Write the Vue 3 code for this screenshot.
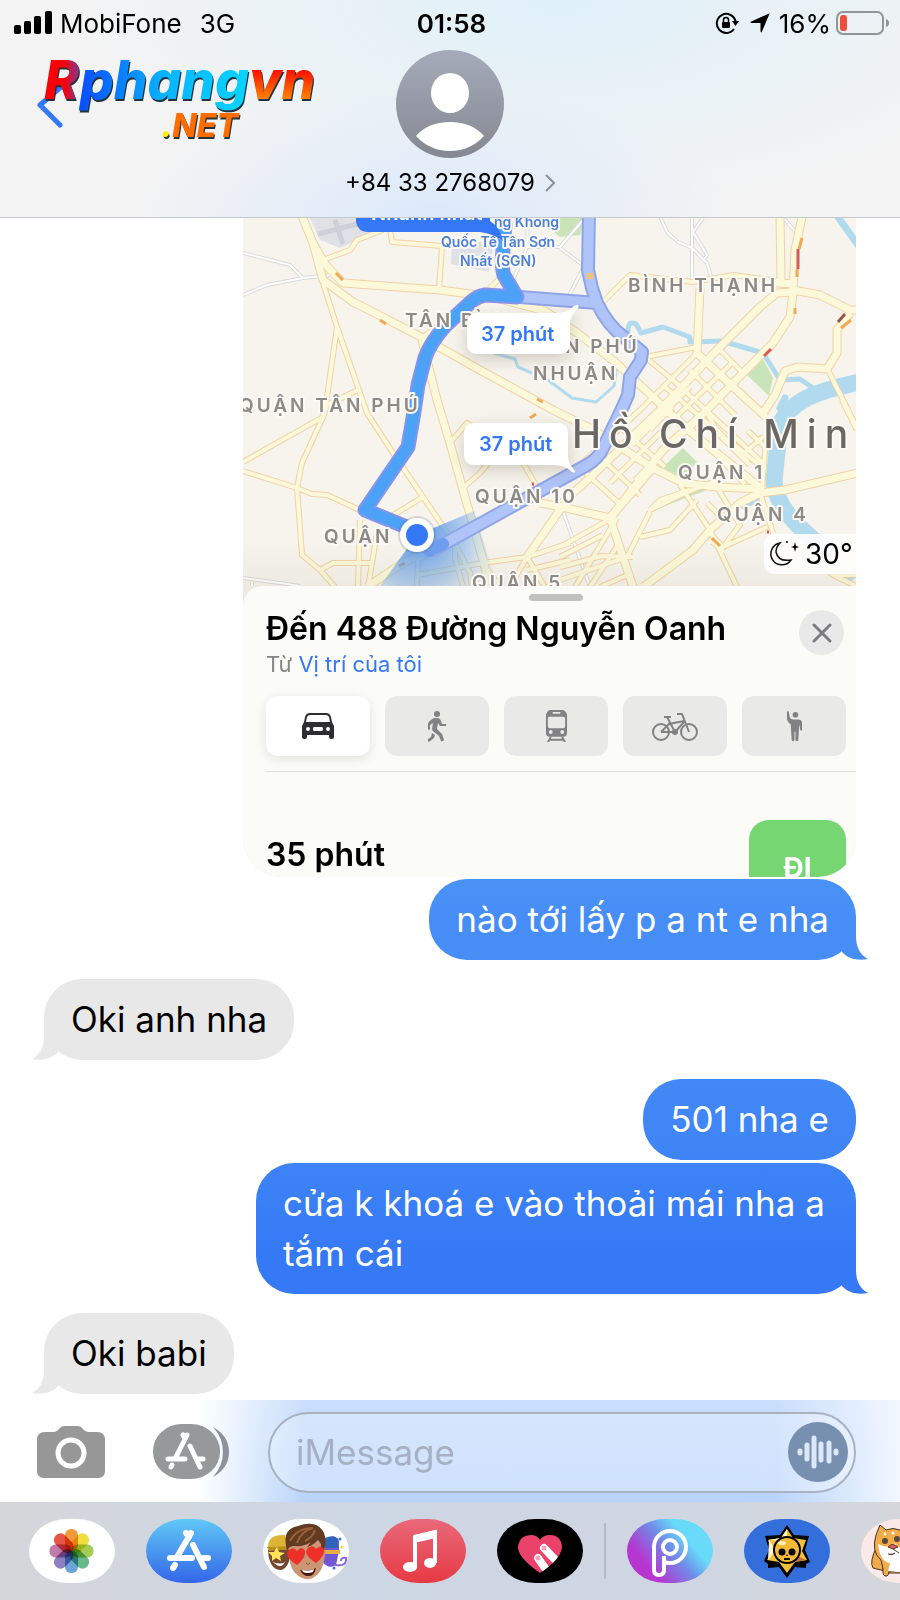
<template>
  <div class="phone">
    <header class="header">
      <div class="status-bar">
        <div class="status-left">
          <svg class="signal" viewBox="0 0 38 24">
            <rect x="0" y="14" width="7" height="9" rx="2" />
            <rect x="10" y="10" width="7" height="13" rx="2" />
            <rect x="20" y="5" width="7" height="18" rx="2" />
            <rect x="31" y="0" width="7" height="23" rx="2" />
          </svg>
          <span>MobiFone</span>
          <span class="network">3G</span>
        </div>
        <span class="clock">01:58</span>
        <div class="status-right">
          <svg class="rotation-lock" viewBox="0 0 24 22">
            <path d="M19 17A9.500 9.500 0 1 1 20.500 9" fill="none" stroke="#000" stroke-width="2" />
            <path d="M17 9h7l-3.500 5z" />
            <rect x="7" y="10" width="8" height="6" rx="1" />
            <path d="M8.500 10V8a2.500 2.500 0 0 1 5 0v2" fill="none" stroke="#000" stroke-width="1.500" />
          </svg>
          <svg class="location-arrow" viewBox="0 0 20 20">
            <path d="M19.700.3 12 18.500q-1 2-1.500-.5V10H2q-3 0-.7-1.400z" />
          </svg>
          <span class="percent">16%</span>
          <svg class="battery" viewBox="0 0 53 24">
            <rect x="1" y="1" width="46" height="22" rx="6" fill="none" stroke="#919597" stroke-width="2" />
            <rect x="4" y="4" width="7" height="16" rx="3" fill="#eb4e3d" />
            <path d="M50 8q3 1 3 4t-3 4z" fill="#919597" />
          </svg>
        </div>
      </div>

      <div class="contact-row">
        <button class="back-btn" aria-label="Back">
          <svg viewBox="0 0 30 44">
            <path d="M25 3 4 21l20 20" fill="none" stroke="#3478f6" stroke-width="5" stroke-linecap="round" stroke-linejoin="round" />
          </svg>
        </button>
        <button class="contact">
          <svg class="avatar" viewBox="0 0 108 108">
            <defs>
              <linearGradient id="avatarFill" x1="0" y1="0" x2="0" y2="1">
                <stop offset="0" stop-color="#a6abb9" />
                <stop offset="1" stop-color="#858892" />
              </linearGradient>
            </defs>
            <circle cx="54" cy="54" r="54" fill="url(#avatarFill)" />
            <ellipse cx="54" cy="43" rx="19" ry="20" fill="#fff" />
            <path d="M20 86q12-14 34-14t34 14q-14 15-34 15T20 86z" fill="#fff" />
          </svg>
          <span class="contact-name">
            +84 33 2768079
            <svg viewBox="0 0 10 18">
              <path d="m1 1 8 8-8 8" fill="none" stroke="#8c9096" stroke-width="2" />
            </svg>
          </span>
        </button>
        <span></span>
      </div>

      <svg class="site-logo" viewBox="0 0 280 84">
        <defs>
          <linearGradient id="logoR">
            <stop offset=".55" stop-color="#fb0006" />
            <stop offset="1" stop-color="#7a3c9a" />
          </linearGradient>
          <linearGradient id="logoBlue">
            <stop offset="0" stop-color="#0a4bff" />
            <stop offset=".5" stop-color="#08b3ff" />
            <stop offset="1" stop-color="#08d5ff" />
          </linearGradient>
          <linearGradient id="logoVn" x1="0" y1="0" x2="0" y2="1">
            <stop offset=".35" stop-color="#fb1100" />
            <stop offset=".8" stop-color="#ff8400" />
          </linearGradient>
        </defs>
        <g class="logo-text">
          <text x="0" y="41" fill="url(#logoR)">R</text>
          <text x="36" y="41" fill="url(#logoBlue)">phang</text>
          <text x="205" y="41" fill="url(#logoVn)">vn</text>
          <text x="117" y="79" class="logo-small"><tspan fill="#fff200">.</tspan><tspan fill="#ff6d00">NET</tspan></text>
        </g>
      </svg>
    </header>

    <main class="chat">
      <article class="shared-map">
        <svg class="map" viewBox="243 218 613 368">
          <defs>
            <radialGradient id="cone" gradientUnits="userSpaceOnUse" cx="417" cy="535" r="82">
              <stop offset="0" stop-color="#3b85ea" stop-opacity=".9" />
              <stop offset=".6" stop-color="#6ba5ea" stop-opacity=".5" />
              <stop offset="1" stop-color="#9cc4ee" stop-opacity=".1" />
            </radialGradient>
            <linearGradient id="mapFade" x1="0" y1="0" x2="0" y2="1">
              <stop offset="0" stop-color="#807860" stop-opacity="0" />
              <stop offset="1" stop-color="#807860" stop-opacity=".08" />
            </linearGradient>
          </defs>
          <rect x="243" y="218" width="613" height="368" fill="#f7f4ed" />

          <g fill="#dfe1e6">
            <path d="M310 218h85l-10 14-28 8-17 8-20-8z" />
            <path d="M452 242h42l-5 30-38-8z" />
          </g>
          <path d="m318 234 55-14m-38 0 8 24" stroke="#cdd0d8" stroke-width="5" fill="none" />
          <g fill="#c9e4b8">
            <path d="M553 218h31l-4 17-20 2-10-8z" />
            <path d="m747 375 16-16 10 19-4 18z" />
            <path d="m662 468 21-20 14 14-14 15z" />
            <path d="m661 501 46-18v7l-42 16z" />
          </g>

          <g fill="none" stroke="#b2daee" stroke-linecap="round" stroke-linejoin="round">
            <path d="M860 382C820 390 790 400 780 425L774 480Q774 510 825 549" stroke-width="17" />
            <path d="M628 331q0-11 8-7l5 9 22-6 27 10v5l32-1 41 12 17 27 20-1 13 9" stroke-width="5" />
            <path d="m838 217 20 28M785 398l-5 10" stroke-width="7" />
            <path d="m493 353 22 6 3 8 30 13 24 18 24 4 18-16 3-22-9-6" stroke-width="3" />
            <path d="m850 577 8-6" stroke-width="8" />
            <path d="M743 507l16-7" stroke-width="4" />
          </g>

          <g fill="none" stroke-linejoin="round">
            <path v-for="road in lanes" :key="road" :d="road" stroke="#d9d9d8" stroke-width="4" />
            <path v-for="road in lanes" :key="'in' + road" :d="road" stroke="#fff" stroke-width="2" />
            <path v-for="road in streets" :key="road" :d="road" stroke="#f0d2a6" stroke-width="6" />
            <path v-for="road in avenues" :key="road" :d="road" stroke="#f0d2a6" stroke-width="9" />
            <path v-for="road in streets" :key="'in' + road" :d="road" stroke="#fcf8da" stroke-width="4" />
            <path v-for="road in avenues" :key="'in' + road" :d="road" stroke="#fcf9da" stroke-width="7" />
          </g>

          <g fill="none" stroke-width="3">
            <path d="M798 249v20M764 356l7-7" stroke="#dd5b54" />
            <path d="m802 238-3 11M797 269v8M795 308v6M841 328l10-8M336 273l7 7M380 320l6 4M530 418l6-4M537 399l6 3M399 566l6-3M712 538l8 8" stroke="#eeaa55" />
            <path d="m838 322 7-8" stroke="#93544f" />
            <path d="M532 484h2M767 532h2" stroke="#e05050" />
          </g>

          <path d="M417 535 474 511 498 586H380z" fill="url(#cone)" />

          <g fill="none" stroke-linejoin="round" stroke-linecap="round">
            <path :d="altRoute" stroke="#90a4e7" stroke-width="14" />
            <path :d="altRoute" stroke="#afc5f9" stroke-width="10" />
            <path d="m429 551 14-7" stroke="#6d9df0" stroke-width="12" />
            <path :d="mainRoute" stroke="#8894eb" stroke-width="15" />
            <path :d="mainRoute" stroke="#4ba2f7" stroke-width="11" />
            <path d="M590 273v6" stroke="#f1c27b" stroke-width="7" stroke-linecap="butt" />
          </g>
          <rect x="243" y="540" width="613" height="46" fill="url(#mapFade)" />

          <text
            v-for="label in labels"
            :key="label.text + label.x"
            :x="label.x"
            :y="label.y"
            :class="['map-label', label.kind]"
          >{{ label.text }}</text>

          <circle cx="417" cy="535" r="19" fill="#50607a" opacity=".2" />
          <circle cx="417" cy="535" r="17" fill="#fff" />
          <circle cx="417" cy="535" r="11" fill="#3478f6" />

          <path d="M356 210v12q2 10 12 10H480q14 2 23 9-3-14-13-20v-11z" fill="#3478f6" />
          <text x="371" y="220" class="fastest">Nhanh nhất</text>

          <g class="callout">
            <path d="M478 313h78q12 0 18-7 6-3 4 2-9 9-8 18v17q0 11-11 11h-81q-11 0-11-11v-19q0-11 11-11z" />
            <text x="481" y="341">37 phút</text>
          </g>
          <g class="callout">
            <path d="M475 423h82q11 0 11 11v20q-1 8 7 17 1 3-3 1-7-7-18-7H475q-11 0-11-11v-20q0-11 11-11z" />
            <text x="479" y="451">37 phút</text>
          </g>

          <rect x="764" y="534" width="100" height="40" rx="10" fill="#fdfdfc" opacity=".93" />
          <path d="M780 543a11 11 0 1 0 11 17q-13 2-15-8 0-5 4-9z" fill="none" stroke="#111" stroke-width="1.500" />
          <path d="m795 542 1 4 3 1-3 1-1 4-1-4-3-1 3-1z" />
          <circle cx="787" cy="542" r="1" />
          <text x="805" y="564" class="weather">30°</text>
        </svg>

        <section class="sheet">
          <div class="grabber"></div>
          <div class="sheet-head">
            <div>
              <h2>Đến 488 Đường Nguyễn Oanh</h2>
              <p>Từ <a href="#">Vị trí của tôi</a></p>
            </div>
            <button class="close-btn" aria-label="Close">
              <svg viewBox="0 0 20 20">
                <path d="m2 2 16 16M18 2 2 18" stroke="#7d7d80" stroke-width="3" stroke-linecap="round" />
              </svg>
            </button>
          </div>

          <div class="modes">
            <button class="mode active" aria-label="Drive">
              <svg viewBox="0 0 32 26" width="32">
                <path fill-rule="evenodd" d="M8 0h16q4 0 5 4l1 5 2 4v11q0 2-2 2h-1q-2 0-2-2v-2H5v2q0 2-2 2H2q-2 0-2-2V13l2-4 1-5q1-4 5-4zM8 2Q6 2 5 4L4 9h24l-1-5q-1-2-3-2zM6 14a2 2 0 1 0 0 4 2 2 0 0 0 0-4zm20 0a2 2 0 1 0 0 4 2 2 0 0 0 0-4zM12 14q-1 0-1 2t1 2h8q1 0 1-2t-1-2z" />
              </svg>
            </button>
            <button class="mode" aria-label="Walk">
              <svg viewBox="0 0 20 32" width="20">
                <circle cx="10" cy="4" r="3" />
                <path d="M10 8q3 0 4 3l1 3h4q1 2-1 2h-5l-2-3-1 6 5 5 2 6q-1 2-3 1l-2-5-5-4q-2-1-2-3l1-6-3 2v4q-1 2-2 0v-5q0-2 3-4l3-2z" />
                <path d="m5 23 3 2-1 3-5 4q-2-1-1-3l3-2z" />
              </svg>
            </button>
            <button class="mode" aria-label="Transit">
              <svg viewBox="0 0 24 34" width="23">
                <path fill-rule="evenodd" d="M5 0h14q4 2 4 6v18q0 4-4 4H5q-4 0-4-4V6q0-4 4-6zm3 2v2h8V2zM4 7q-1 0-1 2v8q0 2 2 2h14q2 0 2-2V9q0-2-2-2zm2 14a2 2 0 1 0 0 4 2 2 0 0 0 0-4zm12 0a2 2 0 1 0 0 4 2 2 0 0 0 0-4z" />
                <path d="m6 28-3 6m15-6 3 6M5 31h14" fill="none" stroke="#828284" stroke-width="2" />
              </svg>
            </button>
            <button class="mode" aria-label="Cycle">
              <svg viewBox="0 0 46 29" width="46" class="line-icon">
                <circle cx="9" cy="20" r="8" />
                <circle cx="37" cy="20" r="8" />
                <path d="m9 20 8-8 15-3M15 5l8 15H9m14 0 9-10m-7-8h5l7 18M12 5h7" />
                <circle cx="23" cy="20" r="2" />
              </svg>
            </button>
            <button class="mode" aria-label="Rideshare">
              <svg viewBox="0 0 18 34" width="17">
                <circle cx="10" cy="5" r="3" />
                <path d="M1 2q1-2 2 0l1 6q1 2 4 2h5q4 0 4 4v7q-1 2-2 0l-1-6-1 17q-1 2-3 0v-9h-1v9q-1 2-3 0l-1-17Q1 13 1 8z" />
              </svg>
            </button>
          </div>

          <div class="route-row">
            <strong>35 phút</strong>
            <button class="go-btn">ĐI</button>
          </div>
        </section>
      </article>

      <div
        v-for="msg in messages"
        :key="msg.text"
        :class="['bubble', msg.from, msg.tone, { spaced: msg.spaced }]"
      >
        {{ msg.text }}
        <svg v-if="msg.tail" class="tail" viewBox="0 0 32 42">
          <path d="M20 0V18C20 29 24 37 32 41 22 43 12 41 6 34V0z" />
        </svg>
      </div>
    </main>

    <form class="composer" @submit.prevent="draft = ''">
      <button type="button" class="camera-btn" aria-label="Camera">
        <svg viewBox="0 0 68 52">
          <path fill="#979797" d="M8 6h9q3 0 5-3 2-3 5-3h14q3 0 5 3 2 3 5 3h9q8 0 8 8v31q0 7-7 7H7q-7 0-7-7V14q0-8 8-8z" />
          <circle cx="34" cy="27" r="13" fill="none" stroke="#fff" stroke-width="5" />
        </svg>
      </button>
      <button type="button" class="apps-btn" aria-label="Apps">
        <svg viewBox="0 0 76 56">
          <rect width="67" height="55" rx="29" ry="27" fill="#969899" />
          <path d="M60 3q16 9 16 25T60 53q10-11 10-25T60 3z" fill="#8c919c" />
          <g fill="none" stroke="#fff" stroke-width="5" stroke-linecap="round">
            <path d="M34 11 23 33M30 11l2 3M37 22l10 21M15 35h17m12 0h6M19 41l-1 2" />
          </g>
        </svg>
      </button>
      <div class="input-wrap">
        <input v-model="draft" type="text" placeholder="iMessage" aria-label="iMessage" />
        <button type="button" class="voice-btn" aria-label="Record audio">
          <svg viewBox="0 0 60 60">
            <path d="M12 29v2M19 23v14M26 16v28M33 22v16M41 21v18M48 29v2" stroke="#dce7f7" stroke-width="5" stroke-linecap="round" />
          </svg>
        </button>
      </div>
    </form>

    <nav class="app-strip">
      <button class="app photos" aria-label="Photos">
        <svg viewBox="0 0 86 64">
          <rect
            v-for="(color, i) in petals"
            :key="color"
            x="36"
            y="10"
            width="13"
            height="22"
            rx="6"
            :fill="color"
            :transform="`rotate(${i * 45} 42.500 32)`"
          />
        </svg>
      </button>
      <button class="app store" aria-label="App Store">
        <svg viewBox="0 0 86 64">
          <g fill="none" stroke="#fff" stroke-width="6" stroke-linecap="round">
            <path d="M45 14 31 38M40 14l3 4M47 26l11 22M24 39h22m11 0h5M29 46l-2 3" />
          </g>
        </svg>
      </button>
      <button class="app" aria-label="Memoji">
        <svg viewBox="0 0 86 64">
          <path d="M5 31q1 20 13 20 9-2 10-21z" fill="#75492f" />
          <path d="M5 28q0-13 17-12l4 13z" fill="#deb437" />
          <path d="m4 28 23-1v3L6 32z" fill="#bd8f1c" />
          <path d="m14 28 2 5 6 1-5 3 1 5-5-3-4 3v-5l-4-4h6z" fill="#ffe35a" />
          <path d="M10 43q8 3 12 0-4 8-12 0z" fill="#fff" />
          <path d="M62 20q11-6 14 2v10l-3 14q-8 5-14-4z" fill="#7257d4" />
          <path d="M62 19q9-4 13 1v9H62z" fill="#2e65b8" />
          <path d="M62 31h15v4H62z" fill="#e9ad45" />
          <path d="M72 46q12 2 11-7-5-1-5 3" fill="none" stroke="#8565d7" stroke-width="2" />
          <g fill="#3b6cf2"><circle cx="77" cy="20" r="1.500" /><circle cx="71" cy="49" r="1.500" /></g>
          <circle cx="79" cy="28" r="1.500" fill="#f7d52f" />
          <path d="M26 25q-1 22 6 29 12 12 23 1 8-8 7-30L44 14z" fill="#cc9675" />
          <path d="M24 31Q18 10 35 7q19-7 26 7 3 8 0 18-3-1-3-7l-3-4q-6 6-11 7l4-5q-7 5-17 4-4 0-7 4z" fill="#633a22" />
          <path d="M27 22Q34 9 50 9 38 12 34 24M42 22q8-4 10-11" stroke="#9a6237" stroke-width="2" fill="none" />
          <g fill="#ef2f2a">
            <path d="M34 46q-14-9-8-15 5-4 8 1 5-6 8 0 1 7-8 14z" />
            <path d="M53 44q-14-9-8-15 5-4 8 1 5-5 8 0 1 7-8 14z" />
          </g>
          <path d="M43 44q2 3 4 0" stroke="#8f5b42" fill="none" />
          <path d="M37 51q9 2 16-2-2 9-8 8-5 0-8-6z" fill="#4a1710" />
          <path d="M39 51q7 2 12-1l-1 3q-6 2-10 0z" fill="#fff" />
        </svg>
      </button>
      <button class="app music" aria-label="Music">
        <svg viewBox="0 0 86 64">
          <path d="M35 49V18l20-5v31" fill="none" stroke="#fff" stroke-width="4" />
          <path d="m34 16 22-5v8l-22 5z" fill="#fff" />
          <ellipse cx="30" cy="48" rx="7" ry="5" fill="#fff" />
          <ellipse cx="50" cy="44" rx="6" ry="5" fill="#fff" />
        </svg>
      </button>
      <button class="app touch" aria-label="Digital Touch">
        <svg viewBox="0 0 86 64">
          <defs>
            <clipPath id="heartClip">
              <path d="M43 54Q20 38 21 27q2-11 13-11 6 0 9 5 3-5 10-5 11 0 12 12-1 12-22 26z" />
            </clipPath>
          </defs>
          <path d="M43 54Q20 38 21 27q2-11 13-11 6 0 9 5 3-5 10-5 11 0 12 12-1 12-22 26z" fill="#eb426b" />
          <g clip-path="url(#heartClip)">
            <path d="m66 49-19-20m8 30L41 39" stroke="#fff" stroke-width="8" stroke-linecap="round" />
          </g>
          <circle cx="47" cy="29" r="2.500" fill="#f5a3b5" />
          <circle cx="41" cy="39" r="2.500" fill="#f5a3b5" />
        </svg>
      </button>
      <span class="strip-divider"></span>
      <button class="app picsart" aria-label="PicsArt">
        <svg viewBox="0 0 86 64">
          <g fill="none" stroke="#fff" stroke-width="4">
            <path d="M27 28a16 16 0 1 1 16 16q-3 0-6-1v8q0 5-5 5t-5-5z" />
            <circle cx="43" cy="28" r="7" />
            <path d="M37 37v7" />
          </g>
        </svg>
      </button>
      <button class="app brawl" aria-label="Brawl Stars">
        <svg viewBox="0 0 86 64">
          <path d="m43 6 7 10 15 1-4 14 5 12-4 2v4l-11-1-8 11-8-11-11 1v-4l-4-3 5-11-4-14 15-1z" />
          <path d="m43 10 6 9 13 2-4 11 5 9-12 2-8 11-8-11-12-2 5-9-4-11 13-2z" fill="#f3c13c" />
          <path d="M43 10v12L24 21l13-2zM25 21l7 10-8 10" fill="#fff6cf" />
          <path d="m43 54 8-11 11-2-8-4z" fill="#cc7040" />
          <circle cx="43" cy="31" r="13" fill="#f4ba35" stroke="#000" stroke-width="2" />
          <ellipse cx="38" cy="24" rx="4" ry="2" fill="#fff0b4" />
          <circle cx="38" cy="33" r="3.500" /><circle cx="48" cy="33" r="3.500" />
          <path d="m43 35-1 2h2zM40 39h6v2h-6z" />
        </svg>
      </button>
      <button class="app shiba" aria-label="Shiba stickers">
        <svg viewBox="0 0 86 64">
          <g stroke="#443329">
            <path d="M16 27Q8 43 12 49l12 3 2-22z" fill="#efaa49" />
            <path d="m15 16 4-10 6 5q7-3 14 0l5-5q4 10 3 16 3 10-1 16l5 16H23l-3-13q-10-8-5-25z" fill="#f2ad48" />
            <path d="M22 49q-1 9 4 8 2-1 2-5l18 2q2 6 6 2l-1-16" fill="#efaa49" />
          </g>
          <path d="M17 25q2 18 12 19l-2 8 19 2q4-14 0-25-8 2-12-5-5 7-17 1z" fill="#fff" />
          <circle cx="24" cy="22" r="3" fill="#56483f" /><circle cx="36" cy="20" r="3" fill="#56483f" />
          <circle cx="24" cy="15" r="1.500" fill="#fff" /><circle cx="32" cy="14" r="1.500" fill="#fff" />
          <path d="M27 28q4-5 10 0l-5 2zM27 35q4 2 7-1M32 30l6 4" fill="#df5c52" stroke="#54372e" />
        </svg>
      </button>
    </nav>
  </div>
</template>

<script setup>
import { ref } from 'vue'

const draft = ref('')

const messages = [
  { text: 'nào tới lấy p a nt e nha', from: 'me', tone: 'light', tail: true },
  { text: 'Oki anh nha', from: 'them', tail: true, spaced: true },
  { text: '501 nha e', from: 'me', tone: 'mid', spaced: true },
  { text: 'cửa k khoá e vào thoải mái nha a tắm cái', from: 'me', tone: 'deep', tail: true },
  { text: 'Oki babi', from: 'them', tail: true, spaced: true },
]

const petals = ['#f09a38', '#f1dd3d', '#a4cb55', '#69ba8b', '#6aa4d8', '#8c80c0', '#c27cac', '#e75548']

const labels = [
  { text: 'ng Không', x: 494, y: 227, kind: 'airport' },
  { text: 'Quốc Tế Tân Sơn', x: 441, y: 247, kind: 'airport' },
  { text: 'Nhất (SGN)', x: 460, y: 266, kind: 'airport' },
  { text: 'BÌNH THẠNH', x: 628, y: 292 },
  { text: 'TÂN BÌNH', x: 405, y: 327 },
  { text: 'N PHÚ', x: 565, y: 353 },
  { text: 'NHUẬN', x: 533, y: 380 },
  { text: 'QUẬN TÂN PHÚ', x: 239, y: 412 },
  { text: 'Hồ Chí Min', x: 572, y: 448, kind: 'city' },
  { text: 'QUẬN 1', x: 678, y: 479 },
  { text: 'QUẬN 10', x: 475, y: 503 },
  { text: 'QUẬN 4', x: 717, y: 521 },
  { text: 'QUẬN', x: 324, y: 543 },
  { text: 'QUẬN 5', x: 472, y: 589 },
]

const mainRoute = 'M505 225 503 250Q501 272 505 277L517 297 485 295Q478 296 472 301L445 326Q429 345 425 358L418 385 413 418 408 447 365 510 409 528'
const altRoute = 'M589 212 588 270 592 288 597 303 520 297M597 303Q608 326 625 338L642 352 641 360 630 377 628 395 620 413 603 448Q599 458 587 465L433 550'

// small white lanes
const lanes = [
  'M243 253 290 265 303 278 333 275',
  'M243 295 267 285 303 278',
  'M243 578 280 583 300 586M252 582V590',
  'M660 216 667 232 678 242 692 248 707 263 712 280',
  'M692 216V280M703 218 693 232 707 255 703 261',
  'M560 247 583 220M560 248 584 266M568 298 584 266',
  'M783 217 799 236',
  'M528 218 527 247 510 287M527 247 560 247',
  'M560 503 590 587',
]

// thinner city streets
const streets = [
  'M323 260 350 250 357 240 383 230M388 218 392 242 442 246 439 290',
  'M323 283 337 327 327 397 323 417 302 463 297 488 302 555 320 570 335 587',
  'M337 327 367 413 393 453 423 497 457 547 470 573 472 587',
  'M243 462 323 417 327 405 358 390M243 471 297 488 312 494 327 495 362 511',
  'M320 570 333 563 372 563M360 520 358 587M377 533 368 587M390 517 423 497',
  'M422 338 445 320M488 290 503 275M450 443 467 423 480 433',
  'M463 488 480 473 490 461M523 463 537 487 540 503',
  'M417 587 418 560 440 545M417 575 483 563 527 557 570 543M455 546V558L463 587',
  'M510 587 527 557 545 587M527 570 570 560M483 563 500 587',
  'M603 302 630 275 693 282 733 275 793 283',
  'M645 357 697 347M645 357 673 380 720 423 765 465',
  'M697 353 640 410 575 470M720 350 743 373M733 362 673 420 610 483',
  'M653 397 690 428 745 484M665 387 705 421 750 465M690 370 735 415',
  'M653 397 662 405M672 407 650 430M690 387 632 445M706 412 690 429',
  'M593 450 640 495M577 465 622 506M623 430 665 467M655 418 632 440',
  'M706 410 715 428 748 462M732 443 763 468M748 431 766 448M743 454 764 436',
  'M635 480 653 462M650 512 627 557 560 580M560 547 612 518 653 470',
  'M650 510 685 493 718 480M650 510 660 500 690 490M697 500 670 530 640 537',
  'M560 567 602 556 633 557M575 587 617 518M590 587 618 545M600 587 632 573',
  'M560 557 603 535M717 487 740 525 723 547 707 530M723 547 767 527',
  'M760 493 773 533M766 440 762 490M707 503 725 521M680 485 710 530 737 587',
  'M712 542 724 552M827 368 848 410 858 430M842 400 857 430',
  'M815 560 833 575 857 575M833 575 858 587',
]

const avenues = [
  'M302 216 313 243 325 264 343 283 440 290 493 297 545 311 580 335 615 362 653 397 682 425 763 490',
  'M313 243 323 280 353 302 373 312 423 338 480 370 553 410 590 428 625 450 653 468 683 483 717 487 762 489',
  'M422 340 437 400 450 443 463 490 483 560 490 587',
  'M367 587 403 563 440 545',
  'M540 503 562 507 610 518 633 587M562 507 527 557',
  'M780 217 781 280M802 217 795 250 793 293 790 317 773 343 743 373 707 410 663 450 610 518',
  'M765 282 793 284M793 292 777 293 760 307 717 350 660 410 593 475 562 503',
  'M793 290 820 295 850 310H860M850 313 837 330V353L827 369 798 367 785 371 775 395 763 413',
  'M700 288 697 353 733 387 766 417',
  'M858 473 785 490 760 493 740 503 710 530 693 550 643 587',
]
</script>

<style>
body {
  margin: 0;
}
</style>

<style scoped>
.phone {
  display: flex;
  flex-direction: column;
  min-height: 100vh;
  overflow: hidden;
  background: #fff;
  color: #000;
  font-family: Inter, 'Liberation Sans', sans-serif;
}

button {
  padding: 0;
  border: none;
  background: none;
  color: inherit;
  font-family: inherit;
  cursor: pointer;
}

svg {
  display: block;
}

/* header */
.header {
  position: relative;
  flex-shrink: 0;
  border-bottom: 1px solid #c5c9cd;
  background:
    radial-gradient(ellipse 300px 130px at 48% 100%, #dce9fb, transparent),
    radial-gradient(ellipse 480px 210px at 62% 0, #dff0f9, transparent),
    #f3f3f3;
}

.status-bar {
  display: grid;
  grid-template-columns: 1fr auto 1fr;
  align-items: center;
  height: 46px;
  padding: 0 11px 0 14px;
  font-size: 26px;
}

.status-left,
.status-right {
  display: flex;
  align-items: center;
}

.status-right {
  justify-content: flex-end;
}

.signal {
  width: 38px;
  margin-right: 8px;
}

.network {
  margin-left: 18px;
}

.clock {
  font-weight: 600;
}

.rotation-lock {
  width: 24px;
  margin-right: 11px;
}

.location-arrow {
  width: 20px;
  margin-right: 9px;
}

.percent {
  margin-right: 5px;
}

.battery {
  width: 53px;
}

.contact-row {
  display: grid;
  grid-template-columns: 1fr auto 1fr;
  padding: 4px 36px 19px;
}

.back-btn {
  align-self: start;
  justify-self: start;
  margin-top: 34px;
}

.back-btn svg {
  width: 30px;
}

.contact {
  display: flex;
  flex-direction: column;
  align-items: center;
  gap: 10px;
}

.avatar {
  width: 108px;
}

.contact-name {
  display: flex;
  align-items: center;
  gap: 10px;
  font-size: 24px;
  line-height: 30px;
}

.contact-name svg {
  width: 10px;
}

.site-logo {
  position: absolute;
  top: 58px;
  left: 44px;
  width: 280px;
  overflow: visible;
}

.logo-text {
  font-size: 53px;
  font-style: italic;
  font-weight: 800;
  filter: drop-shadow(1px 2px 0 #24333c);
}

.logo-small {
  font-size: 32px;
}

/* messages */
.chat {
  display: flex;
  flex: 1;
  flex-direction: column;
  align-items: flex-start;
  padding: 0 44px;
}

.shared-map {
  align-self: flex-end;
  width: 613px;
  max-width: 100%;
  margin-bottom: 2px;
  overflow: hidden;
  border-radius: 0 0 38px 38px;
  background: #eeeae3;
}

.map {
  width: 100%;
}

.map-label {
  fill: #8d8a85;
  stroke: #fbf9f5;
  stroke-width: 4px;
  paint-order: stroke;
  stroke-linejoin: round;
  font-size: 19px;
  font-weight: 600;
  letter-spacing: 3px;
}

.map-label.airport {
  fill: #4e80d8;
  font-size: 14px;
  letter-spacing: normal;
}

.map-label.city {
  fill: #6b6863;
  font-size: 39px;
  font-weight: 500;
  letter-spacing: 8px;
}

.fastest {
  fill: #fff;
  font-size: 20px;
  font-weight: 600;
}

.callout {
  fill: #fff;
  filter: drop-shadow(0 5px 8px rgba(90, 80, 60, 0.25));
}

.callout text {
  fill: #3478f6;
  font-size: 20px;
  font-weight: 600;
}

.weather {
  font-size: 28px;
}

.sheet {
  padding: 8px 10px 0 23px;
  border-radius: 20px 0 0 0;
  background: #fbfbf8;
}

.grabber {
  width: 54px;
  height: 7px;
  margin: 0 auto 8px;
  border-radius: 4px;
  background: #c1c1bf;
}

.sheet-head {
  display: flex;
  align-items: flex-start;
  justify-content: space-between;
  margin-bottom: 18px;
}

.sheet-head h2 {
  margin: 0;
  font-size: 32px;
  font-weight: 600;
  line-height: 40px;
}

.sheet-head p {
  margin: 1px 0 0;
  color: #858588;
  font-size: 22px;
  line-height: 28px;
}

.sheet-head a {
  color: #3478f6;
  text-decoration: none;
}

.close-btn {
  display: grid;
  place-items: center;
  width: 45px;
  height: 45px;
  margin: 1px 2px 0 0;
  border-radius: 50%;
  background: #e9e9e9;
}

.close-btn svg {
  width: 20px;
}

.modes {
  display: grid;
  grid-template-columns: repeat(5, 1fr);
  gap: 15px;
}

.mode {
  display: grid;
  place-items: center;
  height: 60px;
  border-radius: 12px;
  background: #e9e9e7;
  fill: #828284;
}

.mode.active {
  background: #fff;
  box-shadow: 0 3px 12px rgba(0, 0, 0, 0.1);
  fill: #2e2e30;
}

.line-icon {
  fill: none;
  stroke: #828284;
  stroke-width: 2px;
}

.route-row {
  display: flex;
  align-items: flex-start;
  justify-content: space-between;
  height: 57px;
  margin: 15px -10px 0 0;
  padding: 48px 10px 0 0;
  border-top: 1px solid #dededb;
}

.route-row strong {
  margin-top: 15px;
  font-size: 32px;
  font-weight: 600;
  line-height: 40px;
}

.go-btn {
  width: 97px;
  height: 96px;
  border-radius: 20px;
  background: #76d672;
  color: #fff;
  font-size: 28px;
  font-weight: 700;
}

.bubble {
  position: relative;
  box-sizing: border-box;
  max-width: 600px;
  margin-bottom: 3px;
  padding: 15px 27px 16px;
  border-radius: 38px;
  font-size: 35px;
  line-height: 50px;
}

.bubble.spaced {
  margin-top: 16px;
}

.bubble.me {
  align-self: flex-end;
  color: #fff;
}

.bubble.them {
  background: #e8e8e9;
}

.bubble.light {
  background: linear-gradient(#4b92f7, #468df6 50%);
  fill: #468df6;
}

.bubble.mid {
  background: linear-gradient(#4288f6, #3e84f6);
}

.bubble.deep {
  background: linear-gradient(#3d83f6, #3679f6 70%);
  fill: #3679f6;
}

.tail {
  position: absolute;
  right: -12px;
  bottom: 0;
  width: 32px;
}

.them .tail {
  right: auto;
  left: -12px;
  fill: #e8e8e9;
  transform: scaleX(-1);
}

/* bottom bars */
.composer {
  display: flex;
  flex-shrink: 0;
  align-items: center;
  box-sizing: border-box;
  height: 102px;
  padding: 2px 44px 0 37px;
  background:
    linear-gradient(90deg, #fff 22%, transparent 34%, transparent 86%, #f2f7ff 100%),
    linear-gradient(#cadefc, #b8d4fb);
}

.camera-btn svg {
  width: 68px;
}

.apps-btn {
  margin: 0 39px 0 48px;
}

.apps-btn svg {
  width: 76px;
}

.input-wrap {
  display: flex;
  flex: 1;
  align-items: center;
  box-sizing: border-box;
  min-width: 0;
  height: 81px;
  padding: 0 6px 0 26px;
  border: 2px solid #a8b2c1;
  border-radius: 41px;
  background: linear-gradient(rgba(255, 255, 255, 0.25), rgba(255, 255, 255, 0.3));
}

.input-wrap input {
  flex: 1;
  min-width: 0;
  padding: 0;
  border: none;
  outline: none;
  background: none;
  font-family: inherit;
  font-size: 35px;
}

.input-wrap input::placeholder {
  color: #a5b1c3;
  opacity: 1;
}

.voice-btn {
  flex-shrink: 0;
  width: 60px;
  border-radius: 50%;
  background: #7890b0;
}

.app-strip {
  display: flex;
  flex-shrink: 0;
  align-items: center;
  gap: 31px;
  box-sizing: border-box;
  height: 98px;
  padding-left: 29px;
  overflow: hidden;
  background: linear-gradient(90deg, #d5d6da, #cdd6e4 40%, #cfd6e2 75%, #d4d6db);
}

.app {
  flex: 0 0 86px;
  height: 64px;
  overflow: hidden;
  border-radius: 38px / 32px;
  background: #fff;
}

.photos rect {
  mix-blend-mode: multiply;
}

.store {
  background: linear-gradient(#60c8f6, #3366e8);
}

.music {
  background: linear-gradient(#e9697a, #e63a43);
}

.touch {
  background: #000;
}

.strip-divider {
  flex: 0 0 2px;
  height: 56px;
  margin: 0 -10px;
  border-radius: 1px;
  background: #b3bac7;
}

.picsart {
  background: linear-gradient(50deg, #b636cf 25%, #6e8ee9 52%, #68dbfb 70%);
}

.brawl {
  background: #346edb;
}

.shiba {
  background: #fbe9e8;
}
</style>
